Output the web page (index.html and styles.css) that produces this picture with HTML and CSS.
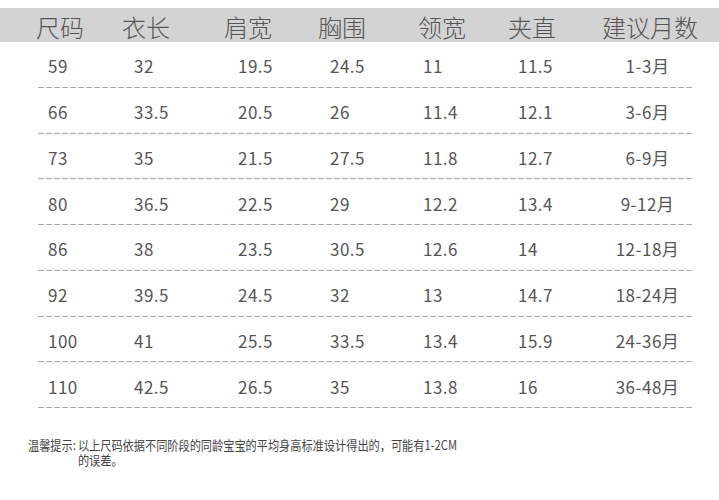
FILE: index.html
```html
<!DOCTYPE html>
<html lang="zh">
<head>
<meta charset="utf-8">
<link rel="stylesheet" href="styles.css">
</head>
<body>
<div class="page">
  <div class="head">
    <div>尺码</div><div>衣长</div><div>肩宽</div><div>胸围</div><div>领宽</div><div>夹直</div><div>建议月数</div>
  </div>
  <div class="rows">
    <div class="row"><span class="c1">59</span><span class="c2">32</span><span class="c3">19.5</span><span class="c4">24.5</span><span class="c5">11</span><span class="c6">11.5</span><span class="c7">1-3月</span></div>
    <div class="row"><span class="c1">66</span><span class="c2">33.5</span><span class="c3">20.5</span><span class="c4">26</span><span class="c5">11.4</span><span class="c6">12.1</span><span class="c7">3-6月</span></div>
    <div class="row"><span class="c1">73</span><span class="c2">35</span><span class="c3">21.5</span><span class="c4">27.5</span><span class="c5">11.8</span><span class="c6">12.7</span><span class="c7">6-9月</span></div>
    <div class="row"><span class="c1">80</span><span class="c2">36.5</span><span class="c3">22.5</span><span class="c4">29</span><span class="c5">12.2</span><span class="c6">13.4</span><span class="c7">9-12月</span></div>
    <div class="row"><span class="c1">86</span><span class="c2">38</span><span class="c3">23.5</span><span class="c4">30.5</span><span class="c5">12.6</span><span class="c6">14</span><span class="c7">12-18月</span></div>
    <div class="row"><span class="c1">92</span><span class="c2">39.5</span><span class="c3">24.5</span><span class="c4">32</span><span class="c5">13</span><span class="c6">14.7</span><span class="c7">18-24月</span></div>
    <div class="row"><span class="c1">100</span><span class="c2">41</span><span class="c3">25.5</span><span class="c4">33.5</span><span class="c5">13.4</span><span class="c6">15.9</span><span class="c7">24-36月</span></div>
    <div class="row"><span class="c1">110</span><span class="c2">42.5</span><span class="c3">26.5</span><span class="c4">35</span><span class="c5">13.8</span><span class="c6">16</span><span class="c7">36-48月</span></div>
  </div>
  <div class="note">
    <span class="label">温馨提示:</span><span class="text">以上尺码依据不同阶段的同龄宝宝的平均身高标准设计得出的，可能有1-2CM<br>的误差。</span>
  </div>
</div>
</body>
</html>
```

FILE: styles.css
```css
html, body {
  margin: 0;
  padding: 0;
  background: #ffffff;
}
body {
  font-family: "Noto Sans CJK SC", "Noto Sans", sans-serif;
  color: #555555;
}
.page {
  width: 719px;
  height: 500px;
  padding-top: 8px;
  box-sizing: border-box;
}
.head {
  height: 34px;
  box-sizing: border-box;
  background: #d3d3d3;
  display: grid;
  grid-template-columns: 86px 102px 94px 100px 90px 94px auto;
  padding-left: 36px;
  padding-top: 3px;
  font-size: 24px;
  line-height: 31px;
  color: #555555;
  font-weight: 300;
}
.rows {
  margin-left: 38px;
  width: 655px;
}
.row {
  height: 45.75px;
  display: grid;
  grid-template-columns: 84px 102px 94px 100px 90px 94px 91px;
  align-items: center;
  font-size: 17px;
  letter-spacing: 0.5px;
  color: #555555;
  background-image: repeating-linear-gradient(to right, #a8a8a8 0 6px, transparent 6px 8px);
  background-size: 100% 1px;
  background-repeat: no-repeat;
  background-position: left bottom;
  padding-top: 2px;
  box-sizing: border-box;
}
.c1 { padding-left: 10px; }
.c2 { padding-left: 12px; }
.c3 { padding-left: 14px; }
.c4 { padding-left: 12px; }
.c5 { padding-left: 5px; }
.c6 { padding-left: 10px; }
.c7 { text-align: center; }
.note {
  margin-top: 29px;
  margin-left: 28px;
  display: flex;
  font-size: 13px;
  line-height: 15px;
  color: #444444;
  white-space: nowrap;
  transform: scaleX(0.86);
  transform-origin: left top;
}
.label {
  flex: none;
  width: 58px;
}
```
